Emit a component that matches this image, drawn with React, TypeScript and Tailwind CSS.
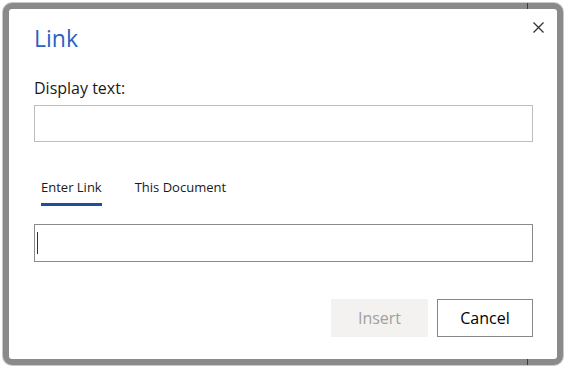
import React from 'react';

export default function App() {
  return (
    <div
      className="relative w-[565px] h-[367px] bg-white pl-[3px] pt-[3px] pr-[2px] pb-[2px]"
      style={{ fontFamily: '"Open Sans", "Noto Sans", sans-serif' }}
    >
      {/* tick marks from the window behind */}
      <span className="absolute left-[527px] top-[3px] w-px h-[6px] bg-[#3a3a3a] z-10" />
      <span className="absolute left-[527px] top-[359px] w-px h-[6px] bg-[#3a3a3a] z-10" />

      <div className="relative h-full w-full rounded-[9px] border-[6px] border-[#8a8a8a] bg-white shadow-[0_0_0_1px_#c9c9c9]">
        {/* Close */}
        <button className="absolute right-[13px] top-[12px] w-[12px] h-[12px] flex items-center justify-center">
          <svg width="11" height="11" viewBox="0 0 11 11">
            <path d="M0.5 0.5 L10.5 10.5 M10.5 0.5 L0.5 10.5" stroke="#333" strokeWidth="1.3" />
          </svg>
        </button>

        <div className="flex flex-col pl-[25px] pr-[24px] pt-[14px]">
          <h1 className="text-[23px] leading-[30px] text-[#2b62c4] font-normal">Link</h1>

          <label className="mt-[25px] text-[16px] leading-[21px] text-[#1b1a19]">Display text:</label>
          <div className="mt-[6px] h-[37px] border border-[#bdbdbd]" />

          <div className="mt-[35px] flex gap-[33px] pl-[7px]">
            <div className="flex flex-col">
              <span className="text-[13px] leading-[20px] text-[#1b1a19]">Enter Link</span>
              <span className="mt-[6px] h-[3px] bg-[#1f4e9c]" />
            </div>
            <div className="flex flex-col">
              <span className="text-[13px] leading-[20px] text-[#1b1a19]">This Document</span>
            </div>
          </div>

          <div className="mt-[18px] h-[38px] border border-[#8a8a8a] flex items-center pl-[2px]">
            <span className="w-px h-[22px] bg-[#333]" />
          </div>

          <div className="mt-[37px] flex justify-end gap-[9px]">
            <button className="w-[97px] h-[38px] bg-[#f3f2f1] text-[16px] text-[#a19f9d]">Insert</button>
            <button className="w-[96px] h-[38px] border border-[#8a8886] bg-white text-[16px] text-[#000]">
              Cancel
            </button>
          </div>
        </div>
      </div>
    </div>
  );
}
